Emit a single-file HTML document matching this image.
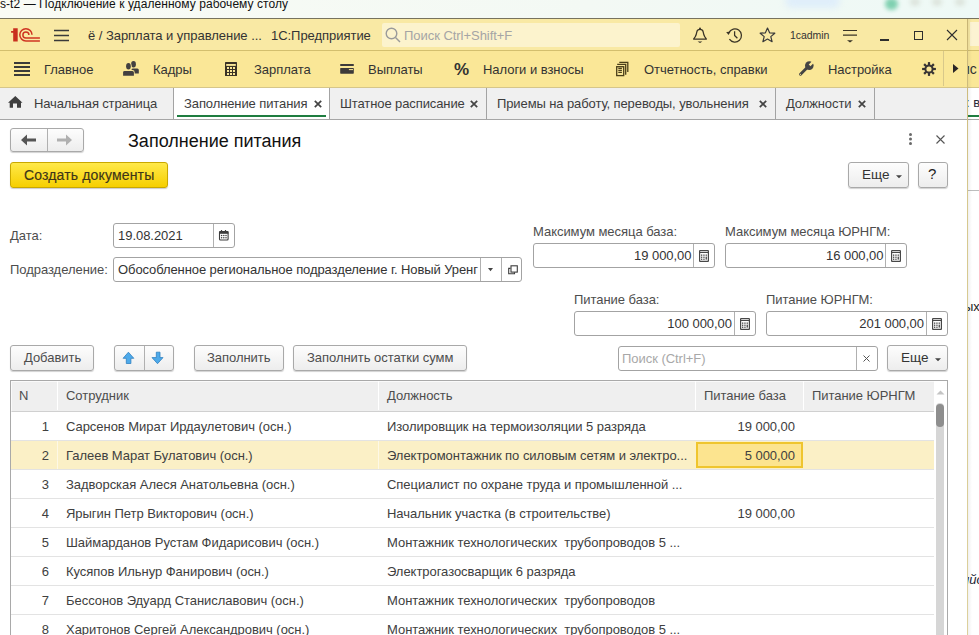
<!DOCTYPE html>
<html><head><meta charset="utf-8">
<style>
*{box-sizing:border-box;margin:0;padding:0}
html,body{width:979px;height:635px;overflow:hidden;background:#fff;font-family:"Liberation Sans",sans-serif;font-size:13px;color:#4d4d4d}
.a{position:absolute}
.t{position:absolute;white-space:nowrap;line-height:16px;letter-spacing:-0.04px}
.btn{position:absolute;border:1px solid #a9a9a9;border-radius:3px;background:linear-gradient(#fdfdfd,#ededed);box-shadow:0 1px 1px rgba(0,0,0,.18);color:#404040}
.inp{position:absolute;border:1px solid #a3a3a3;border-radius:3px;background:#fff;color:#333}
.vd{position:absolute;top:0;bottom:0;width:1px;background:#c8c8c8}
.ic{position:absolute}
.row{position:absolute;left:11px;width:923px;height:29px;border-bottom:1px solid #e3e3e3}
.row .t{top:7px;color:#404040}
</style></head><body>
<!-- RDP title bar -->
<div class="a" style="left:0;top:0;width:979px;height:19px;background:linear-gradient(90deg,#f9fbf5,#f3f9f4 60%,#eef9f6)"></div>
<div class="a" style="left:785px;top:-6px;width:55px;height:14px;border-radius:8px;background:#dfeefa;filter:blur(3px)"></div>
<div class="a" style="left:885px;top:-2px;width:13px;height:12px;border-radius:7px;background:#7fd0b0;filter:blur(2px)"></div>
<div class="a" style="left:910px;top:-2px;width:10px;height:8px;border-radius:5px;background:#dde5dd;filter:blur(2px)"></div>
<div class="a" style="left:932px;top:-2px;width:10px;height:8px;border-radius:5px;background:#dde5dd;filter:blur(2px)"></div>
<div class="a" style="left:955px;top:-2px;width:10px;height:8px;border-radius:5px;background:#dde5dd;filter:blur(2px)"></div>
<div class="t" style="left:0px;top:-3px;color:#111;font-size:12px;line-height:15px;letter-spacing:0.06px">s-t2 — Подключение к удаленному рабочему столу</div>
<div class="a" style="left:0;top:18px;width:979px;height:1px;background:#77735e"></div>

<!-- background window at right -->
<div class="a" style="left:968px;top:19px;width:11px;height:616px;background:#fff;overflow:hidden">
  <div class="a" style="left:0;top:0;width:11px;height:32px;background:#f9e9a4"></div>
  <div class="a" style="left:2px;top:3px;width:12px;height:24px;background:#fcf3d2"></div>
  <div class="a" style="left:0;top:31px;width:11px;height:1px;background:#d3bf6e"></div>
  <div class="a" style="left:0;top:32px;width:11px;height:36px;background:#fae797"></div>
  <div class="a" style="left:0;top:68px;width:11px;height:1px;background:#d6c68a"></div>
  <div class="t" style="left:-6px;top:42px;color:#333;font-size:14px">ис</div>
  <div class="t" style="left:-2px;top:76px;color:#2a2a3a">: в</div>
  <div class="a" style="left:0;top:96px;width:11px;height:2px;background:#1f7d40"></div>
  <div class="a" style="left:0;top:100px;width:11px;height:1px;background:#a6a6a6"></div>
  <div class="a" style="left:0;top:171px;width:11px;height:1px;background:#bdbdbd"></div>
  <div class="t" style="left:-4px;top:280px;color:#222">ых</div>
  <div class="t" style="left:-6px;top:553px;color:#1c1c30;font-style:italic">ийс</div>
  <div class="a" style="left:0;top:0;width:4px;height:616px;background:linear-gradient(90deg,rgba(0,0,0,.06),rgba(0,0,0,0))"></div>
</div>
<!-- 1C window -->
<div class="a" style="left:0;top:19px;width:967px;height:32px;background:#f9e9a4"></div>
<div class="a" style="left:0;top:50px;width:967px;height:1px;background:#d3bf6e"></div>
<div class="a" style="left:0;top:51px;width:967px;height:36px;background:#fae797"></div>
<div class="a" style="left:967px;top:19px;width:1px;height:616px;background:linear-gradient(#c8b474,#d6c88e 30%,#dcd09c)"></div>

<!-- bar1 -->
<svg class="ic" style="left:8px;top:24px" width="36" height="22" viewBox="0 0 36 22">
  <path d="M3.1 7.1 H5.2 V4.2 H9.7 V17.6 H5.2 V8.7 H3.1Z" fill="#c9301f"/>
  <g fill="none" stroke="#cf3422" stroke-width="1.5">
    <path d="M24 10.8 A6.1 6.1 0 1 0 17.9 16.9 H31.9"/>
    <path d="M20.9 10.9 A3 3 0 1 0 17.9 13.9 H31.9"/>
  </g>
</svg>
<svg class="ic" style="left:54px;top:29px" width="15" height="13" viewBox="0 0 15 13">
  <g stroke="#3a3a3a" stroke-width="1.3"><path d="M0 1.5H15M0 6.5H15M0 11.5H15"/></g>
</svg>
<div class="t" style="left:88px;top:28px;color:#333">ё / Зарплата и управление ...</div>
<div class="t" style="left:271px;top:28px;color:#333">1С:Предприятие</div>
<div class="a" style="left:382px;top:23px;width:298px;height:24px;background:#fcf3cd;border-radius:2px"></div>
<svg class="ic" style="left:385px;top:27px" width="16" height="16" viewBox="0 0 16 16">
  <g fill="none" stroke="#9a9a9a" stroke-width="1.4"><circle cx="6.5" cy="6.5" r="5.3"/><path d="M10.5 10.5 L15 15"/></g>
</svg>
<div class="t" style="left:404px;top:28px;color:#a5a5a5">Поиск Ctrl+Shift+F</div>
<!-- bell + history -->
<svg class="ic" style="left:688px;top:24px" width="60" height="24" viewBox="0 0 60 24">
  <g fill="none" stroke="#3a3426" stroke-width="1.25" stroke-linejoin="round">
    <path d="M5.6 15 L7.3 12.6 C8.2 11 8.6 9.3 8.9 7.6 C9.2 6 10.4 5.3 12 5.3 C13.6 5.3 14.8 6 15.1 7.6 C15.4 9.3 15.8 11 16.7 12.6 L18.4 15 Z"/>
        <path d="M40.9 8.6 A6.6 6.6 0 1 1 41.4 15.2"/>
    <path d="M46.6 7.2 V11.5 L49.4 14.3"/>
  </g>
  <circle cx="12" cy="4.6" r="1" fill="#3a3426"/>
  <path d="M9.6 17.4 H14.4 L12 18.9Z" fill="#3a3426"/>
  <path d="M38.2 8.1 L42.5 7.8 L40.5 10.9Z" fill="#3a3426"/>
</svg>
<!-- star -->
<svg class="ic" style="left:759px;top:27px" width="17" height="16" viewBox="0 0 17 16">
  <path d="M8.5 1 L10.6 5.8 L15.8 6.2 L11.8 9.6 L13.1 14.7 L8.5 12 L3.9 14.7 L5.2 9.6 L1.2 6.2 L6.4 5.8Z" fill="none" stroke="#3a3a3a" stroke-width="1.2" stroke-linejoin="round"/>
</svg>
<div class="t" style="left:790px;top:27px;color:#333;font-size:10.5px">1cadmin</div>
<svg class="ic" style="left:843px;top:29px" width="15" height="14" viewBox="0 0 15 14">
  <g stroke="#3a3426" stroke-width="1.2"><path d="M0 1.5H14M0 6.2H14"/></g>
  <path d="M4 11.2 H10 L7 13.5Z" fill="#3a3426"/>
</svg>
<div class="a" style="left:880px;top:39px;width:9px;height:1.5px;background:#2e2e2e"></div>
<div class="a" style="left:914px;top:31px;width:9px;height:9px;border:1.5px solid #2e2e2e"></div>
<svg class="ic" style="left:946px;top:29px" width="12" height="12" viewBox="0 0 12 12">
  <g stroke="#2e2e2e" stroke-width="1.1"><path d="M1 1L11 11M11 1L1 11"/></g>
</svg>

<!-- bar2 -->
<svg class="ic" style="left:14px;top:62px" width="16" height="14" viewBox="0 0 16 14">
  <g stroke="#3a3a3a" stroke-width="2"><path d="M0 1H16M0 5H16M0 9H16M0 13H16"/></g>
</svg>
<div class="t" style="left:44px;top:62px;color:#333">Главное</div>
<svg class="ic" style="left:118px;top:56px" width="28" height="24" viewBox="0 0 28 24">
<g fill="#434040"><ellipse cx="15.5" cy="8.2" rx="2.4" ry="3.2"/><path d="M13.5 14 Q13.5 12.6 15 12.6 H19.3 Q20.8 12.6 20.8 14.1 V17.6 H14.5Z"/></g>
<g fill="#fae797" stroke="#fae797" stroke-width="1.6"><ellipse cx="10.45" cy="10.3" rx="2.35" ry="3.3"/><path d="M5.1 16.3 Q5.1 14.9 6.6 14.9 H14.4 Q15.9 14.9 15.9 16.4 V19.7 H5.1Z"/></g>
<g fill="#434040"><ellipse cx="10.45" cy="10.3" rx="2.35" ry="3.3"/><path d="M5.1 16.3 Q5.1 14.9 6.6 14.9 H14.4 Q15.9 14.9 15.9 16.4 V19.7 H5.1Z"/></g>
</svg>
<div class="t" style="left:153px;top:62px;color:#333">Кадры</div>
<svg class="ic" style="left:225px;top:62px" width="12" height="14" viewBox="0 0 12 14"><rect x="0" y="0" width="12" height="14" rx="0.6" fill="#3a3226"/><rect x="1.2" y="2" width="9.6" height="1.9" fill="#fae797"/><g fill="#fae797"><rect x="2" y="5" width="2" height="2"/><rect x="5" y="5" width="2" height="2"/><rect x="8" y="5" width="2" height="2"/><rect x="2" y="8" width="2" height="2"/><rect x="5" y="8" width="2" height="2"/><rect x="8" y="8" width="2" height="2"/><rect x="2" y="11" width="2" height="2"/><rect x="5" y="11" width="2" height="2"/><rect x="8" y="11" width="2" height="2"/></g></svg>
<div class="t" style="left:254px;top:62px;color:#333">Зарплата</div>
<svg class="ic" style="left:340px;top:64px" width="14" height="10" viewBox="0 0 14 10"><rect x="0.2" y="0" width="13.6" height="1.9" rx="0.5" fill="#3d3a3a"/><rect x="0.2" y="4" width="13.6" height="5.7" rx="0.6" fill="#3d3a3a"/><rect x="8.9" y="5.1" width="4.1" height="1" fill="#fae797"/></svg>
<div class="t" style="left:368px;top:62px;color:#333">Выплаты</div>
<div class="t" style="left:454px;top:60px;color:#333;font-size:17px;font-weight:bold;line-height:20px">%</div>
<div class="t" style="left:483px;top:62px;color:#333">Налоги и взносы</div>
<svg class="ic" style="left:608px;top:58px" width="28" height="22" viewBox="0 0 28 22"><g fill="none" stroke="#4a3f1a" stroke-width="1.3"><path d="M11.3 4.3 H19.8 V13.9"/><path d="M9.2 6.4 H17.7 V16.8"/><rect x="8.7" y="8.7" width="7" height="8.9"/><path d="M10.3 10.4H13.9M10.3 12.4H13.9M10.3 14.4H13.9"/></g></svg>
<div class="t" style="left:644px;top:62px;color:#333">Отчетность, справки</div>
<svg class="ic" style="left:790px;top:55px" width="30" height="26" viewBox="0 0 30 26"><g fill="#444"><path d="M10.5 19.2 L17 12.7" stroke="#444" stroke-width="2.9" stroke-linecap="round"/><circle cx="19.3" cy="10.6" r="4.3"/></g><path d="M20.45 11.15 L24.2 7.4 L22.5 5.7 L18.75 9.45Z" fill="#fae797"/><circle cx="10.4" cy="19.3" r="0.6" fill="#fae797"/></svg>
<div class="t" style="left:828px;top:62px;color:#333">Настройка</div>
<svg class="ic" style="left:921px;top:61px" width="16" height="16" viewBox="-8 -8 16 16"><g fill="#383434"><rect x="-1.1" y="-6.9" width="2.2" height="3" transform="rotate(0)"/><rect x="-1.1" y="-6.9" width="2.2" height="3" transform="rotate(45)"/><rect x="-1.1" y="-6.9" width="2.2" height="3" transform="rotate(90)"/><rect x="-1.1" y="-6.9" width="2.2" height="3" transform="rotate(135)"/><rect x="-1.1" y="-6.9" width="2.2" height="3" transform="rotate(180)"/><rect x="-1.1" y="-6.9" width="2.2" height="3" transform="rotate(225)"/><rect x="-1.1" y="-6.9" width="2.2" height="3" transform="rotate(270)"/><rect x="-1.1" y="-6.9" width="2.2" height="3" transform="rotate(315)"/></g><circle cx="0" cy="0" r="3.6" fill="none" stroke="#383434" stroke-width="2"/></svg>
<div class="a" style="left:943px;top:51px;width:1px;height:35px;background:#d8c88a"></div>
<svg class="ic" style="left:953px;top:64px" width="6" height="9" viewBox="0 0 6 9"><path d="M0 0 L5.5 4.5 L0 9Z" fill="#2a2626"/></svg>

<!-- tabs -->
<div class="a" style="left:0;top:86px;width:967px;height:1px;background:#fae797"></div>
<div class="a" style="left:0;top:87px;width:967px;height:1px;background:#d6c68a"></div>
<div class="a" style="left:0;top:88px;width:967px;height:31px;background:#f0f0f0"></div>
<div class="a" style="left:0;top:119px;width:967px;height:1px;background:#a6a6a6"></div>
<svg class="ic" style="left:8px;top:96px" width="15" height="12" viewBox="0 0 15 12"><path d="M7.3 0 L14.5 6.7 H13 V11.7 H9 V7.4 H5 V11.7 H1.7 V6.7 H0Z" fill="#3f3f3f"/></svg>
<div class="t" style="left:34px;top:96px;color:#3d3d3d;letter-spacing:-0.15px">Начальная страница</div>
<div class="a" style="left:173px;top:88px;width:1px;height:31px;background:#a3a3a3"></div>
<div class="a" style="left:174px;top:88px;width:155px;height:31px;background:#fff"></div>
<div class="t" style="left:184px;top:96px;color:#3d3d3d;letter-spacing:-0.1px">Заполнение питания</div>
<div class="a" style="left:177px;top:115px;width:149px;height:2px;background:#1f7d40"></div>
<div class="a" style="left:329px;top:88px;width:1px;height:31px;background:#a3a3a3"></div>
<div class="t" style="left:340px;top:96px;color:#3d3d3d;letter-spacing:-0.1px">Штатное расписание</div>
<div class="a" style="left:486px;top:88px;width:1px;height:31px;background:#a3a3a3"></div>
<div class="t" style="left:497px;top:96px;color:#3d3d3d;letter-spacing:-0.1px">Приемы на работу, переводы, увольнения</div>
<div class="a" style="left:775px;top:88px;width:1px;height:31px;background:#a3a3a3"></div>
<div class="t" style="left:786px;top:96px;color:#3d3d3d;letter-spacing:-0.1px">Должности</div>
<div class="a" style="left:874px;top:88px;width:1px;height:31px;background:#a3a3a3"></div>
<svg class="ic" style="left:314px;top:100px" width="8" height="8" viewBox="0 0 8 8"><g stroke="#444" stroke-width="1.7"><path d="M0.8 0.8L7.2 7.2M7.2 0.8L0.8 7.2"/></g></svg><svg class="ic" style="left:470px;top:100px" width="8" height="8" viewBox="0 0 8 8"><g stroke="#444" stroke-width="1.7"><path d="M0.8 0.8L7.2 7.2M7.2 0.8L0.8 7.2"/></g></svg><svg class="ic" style="left:759px;top:100px" width="8" height="8" viewBox="0 0 8 8"><g stroke="#444" stroke-width="1.7"><path d="M0.8 0.8L7.2 7.2M7.2 0.8L0.8 7.2"/></g></svg><svg class="ic" style="left:858px;top:100px" width="8" height="8" viewBox="0 0 8 8"><g stroke="#444" stroke-width="1.7"><path d="M0.8 0.8L7.2 7.2M7.2 0.8L0.8 7.2"/></g></svg>
<!-- form header -->
<div class="btn" style="left:10px;top:128px;width:74px;height:24px"></div>
<div class="a" style="left:47px;top:129px;width:1px;height:22px;background:#b0b0b0"></div>
<svg class="ic" style="left:21px;top:134px" width="16" height="12" viewBox="0 0 16 12"><path d="M0 6 L6 0.5 V4.5 H15 V7.5 H6 V11.5Z" fill="#555"/></svg>
<svg class="ic" style="left:56px;top:134px" width="16" height="12" viewBox="0 0 16 12"><path d="M16 6 L10 0.5 V4.5 H1 V7.5 H10 V11.5Z" fill="#b0b0b0"/></svg>
<div class="t" style="left:128px;top:130px;color:#111;font-size:18px;line-height:22px;letter-spacing:0">Заполнение питания</div>
<svg class="ic" style="left:908px;top:133px" width="5" height="12" viewBox="0 0 5 12"><g fill="#6a6a6a"><circle cx="2.5" cy="1.5" r="1.5"/><circle cx="2.5" cy="6" r="1.5"/><circle cx="2.5" cy="10.5" r="1.5"/></g></svg>
<svg class="ic" style="left:936px;top:135px" width="9" height="9" viewBox="0 0 9 9"><g stroke="#555" stroke-width="1.1"><path d="M0.5 0.5L8.5 8.5M8.5 0.5L0.5 8.5"/></g></svg>

<div class="a" style="left:10px;top:162px;width:158px;height:26px;border:1px solid #c9a800;border-radius:3px;background:linear-gradient(#ffe94a,#f6cf00);box-shadow:0 1px 1px rgba(0,0,0,.2)"></div>
<div class="t" style="left:24px;top:167px;color:#3d3518;font-size:14px;letter-spacing:0.15px;-webkit-text-stroke:0.15px #3d3518">Создать документы</div>

<div class="btn" style="left:848px;top:162px;width:61px;height:26px"></div>
<div class="t" style="left:862px;top:167px;color:#333;font-size:13.5px">Еще</div>
<svg class="ic" style="left:896px;top:175px" width="6" height="4" viewBox="0 0 6 4"><path d="M0 0.3H6L3 3.2Z" fill="#444"/></svg>
<div class="btn" style="left:918px;top:162px;width:30px;height:26px"></div>
<div class="t" style="left:928px;top:166px;color:#222;font-size:15px">?</div>

<!-- fields -->
<div class="t" style="left:10px;top:228px">Дата:</div>
<div class="inp" style="left:113px;top:223px;width:122px;height:25px"></div>
<div class="a" style="left:213px;top:224px;width:1px;height:23px;background:#b0b0b0"></div>
<div class="t" style="left:118px;top:228px;color:#333">19.08.2021</div>
<svg class="ic" style="left:218px;top:229px" width="12" height="12" viewBox="0 0 12 12"><rect x="1.5" y="2.6" width="8.6" height="8.4" rx="1" fill="none" stroke="#3c3c3c" stroke-width="1.1"/><rect x="1.2" y="2.2" width="9.2" height="2.6" fill="#3c3c3c"/><path d="M3.5 1V3M7.5 1V3" stroke="#3c3c3c" stroke-width="1.2"/><g fill="#3c3c3c"><circle cx="3.6" cy="6.6" r="0.75"/><circle cx="5.8" cy="6.6" r="0.75"/><circle cx="8" cy="6.6" r="0.75"/><circle cx="3.6" cy="8.7" r="0.75"/><circle cx="5.8" cy="8.7" r="0.75"/><circle cx="8" cy="8.7" r="0.75"/></g></svg>

<div class="t" style="left:10px;top:262px">Подразделение:</div>
<div class="inp" style="left:113px;top:257px;width:409px;height:25px"></div>
<div class="t" style="left:118px;top:262px;width:361px;overflow:hidden;color:#333;letter-spacing:-0.09px">Обособленное региональное подразделение г. Новый Уренг</div>
<div class="a" style="left:480px;top:258px;width:1px;height:23px;background:#b0b0b0"></div>
<div class="a" style="left:501px;top:258px;width:1px;height:23px;background:#b0b0b0"></div>
<svg class="ic" style="left:487px;top:267px" width="7" height="5" viewBox="0 0 7 5"><path d="M1 1H6L3.5 4.3Z" fill="#444"/></svg>
<svg class="ic" style="left:506px;top:263px" width="14" height="13" viewBox="0 0 14 13"><g fill="none" stroke="#3c3c3c" stroke-width="1.1"><rect x="5" y="2.8" width="6.3" height="6.3"/><path d="M4.5 5.4H2.7V10.7H8.5V9.2"/></g></svg>

<div class="t" style="left:533px;top:224px">Максимум месяца база:</div>
<div class="inp" style="left:533px;top:243px;width:182px;height:25px"></div>
<div class="a" style="left:693px;top:244px;width:1px;height:23px;background:#b0b0b0"></div>
<div class="t" style="left:634px;top:248px;width:57px;text-align:right;color:#333">19 000,00</div>
<div class="t" style="left:725px;top:224px">Максимум месяца ЮРНГМ:</div>
<div class="inp" style="left:725px;top:243px;width:182px;height:25px"></div>
<div class="a" style="left:885px;top:244px;width:1px;height:23px;background:#b0b0b0"></div>
<div class="t" style="left:826px;top:248px;width:57px;text-align:right;color:#333">16 000,00</div>

<div class="t" style="left:574px;top:292px">Питание база:</div>
<div class="inp" style="left:574px;top:311px;width:182px;height:25px"></div>
<div class="a" style="left:734px;top:312px;width:1px;height:23px;background:#b0b0b0"></div>
<div class="t" style="left:652px;top:316px;width:80px;text-align:right;color:#333">100 000,00</div>
<div class="t" style="left:766px;top:292px">Питание ЮРНГМ:</div>
<div class="inp" style="left:766px;top:311px;width:182px;height:25px"></div>
<div class="a" style="left:926px;top:312px;width:1px;height:23px;background:#b0b0b0"></div>
<div class="t" style="left:844px;top:316px;width:80px;text-align:right;color:#333">201 000,00</div>

<svg class="ic" style="left:699px;top:250px" width="10" height="12" viewBox="0 0 10 12"><rect x="0.6" y="0.6" width="8.8" height="10.8" rx="0.5" fill="none" stroke="#474747" stroke-width="1.2"/><rect x="1" y="2" width="8" height="1" fill="#474747"/><g fill="#474747"><rect x="2" y="4.5" width="1.3" height="1.3"/><rect x="4.3" y="4.5" width="1.3" height="1.3"/><rect x="6.6" y="4.5" width="1.3" height="1.3"/><rect x="2" y="6.6" width="1.3" height="1.3"/><rect x="4.3" y="6.6" width="1.3" height="1.3"/><rect x="6.6" y="6.6" width="1.3" height="3"/><rect x="2" y="8.6" width="1.3" height="1.3"/><rect x="4.3" y="8.6" width="1.3" height="1.3"/></g></svg><svg class="ic" style="left:891px;top:250px" width="10" height="12" viewBox="0 0 10 12"><rect x="0.6" y="0.6" width="8.8" height="10.8" rx="0.5" fill="none" stroke="#474747" stroke-width="1.2"/><rect x="1" y="2" width="8" height="1" fill="#474747"/><g fill="#474747"><rect x="2" y="4.5" width="1.3" height="1.3"/><rect x="4.3" y="4.5" width="1.3" height="1.3"/><rect x="6.6" y="4.5" width="1.3" height="1.3"/><rect x="2" y="6.6" width="1.3" height="1.3"/><rect x="4.3" y="6.6" width="1.3" height="1.3"/><rect x="6.6" y="6.6" width="1.3" height="3"/><rect x="2" y="8.6" width="1.3" height="1.3"/><rect x="4.3" y="8.6" width="1.3" height="1.3"/></g></svg><svg class="ic" style="left:740px;top:318px" width="10" height="12" viewBox="0 0 10 12"><rect x="0.6" y="0.6" width="8.8" height="10.8" rx="0.5" fill="none" stroke="#474747" stroke-width="1.2"/><rect x="1" y="2" width="8" height="1" fill="#474747"/><g fill="#474747"><rect x="2" y="4.5" width="1.3" height="1.3"/><rect x="4.3" y="4.5" width="1.3" height="1.3"/><rect x="6.6" y="4.5" width="1.3" height="1.3"/><rect x="2" y="6.6" width="1.3" height="1.3"/><rect x="4.3" y="6.6" width="1.3" height="1.3"/><rect x="6.6" y="6.6" width="1.3" height="3"/><rect x="2" y="8.6" width="1.3" height="1.3"/><rect x="4.3" y="8.6" width="1.3" height="1.3"/></g></svg><svg class="ic" style="left:932px;top:318px" width="10" height="12" viewBox="0 0 10 12"><rect x="0.6" y="0.6" width="8.8" height="10.8" rx="0.5" fill="none" stroke="#474747" stroke-width="1.2"/><rect x="1" y="2" width="8" height="1" fill="#474747"/><g fill="#474747"><rect x="2" y="4.5" width="1.3" height="1.3"/><rect x="4.3" y="4.5" width="1.3" height="1.3"/><rect x="6.6" y="4.5" width="1.3" height="1.3"/><rect x="2" y="6.6" width="1.3" height="1.3"/><rect x="4.3" y="6.6" width="1.3" height="1.3"/><rect x="6.6" y="6.6" width="1.3" height="3"/><rect x="2" y="8.6" width="1.3" height="1.3"/><rect x="4.3" y="8.6" width="1.3" height="1.3"/></g></svg>
<!-- table toolbar -->
<div class="btn" style="left:10px;top:345px;width:84px;height:26px"></div>
<div class="t" style="left:24px;top:350px">Добавить</div>
<div class="btn" style="left:114px;top:345px;width:60px;height:26px"></div>
<div class="a" style="left:144px;top:346px;width:1px;height:24px;background:#b0b0b0"></div>
<svg class="ic" style="left:114px;top:345px" width="60" height="27" viewBox="0 0 60 27"><g fill="#4eaaea" stroke="#2f80c0" stroke-width="0.8" stroke-linejoin="miter"><path d="M14.4 7.2 L19.8 13.3 H16.9 V18.5 H12.3 V13.3 H9.1Z"/><path d="M43.5 18.7 L49 12.6 H46 V7.2 H42.3 V12.6 H38Z"/></g></svg>

<div class="btn" style="left:194px;top:345px;width:90px;height:26px"></div>
<div class="t" style="left:207px;top:350px">Заполнить</div>
<div class="btn" style="left:293px;top:345px;width:174px;height:26px"></div>
<div class="t" style="left:307px;top:350px">Заполнить остатки сумм</div>

<div class="inp" style="left:618px;top:346px;width:260px;height:25px"></div>
<div class="t" style="left:622px;top:351px;color:#a8a8a8">Поиск (Ctrl+F)</div>
<div class="a" style="left:856px;top:347px;width:1px;height:23px;background:#b0b0b0"></div>
<svg class="ic" style="left:863px;top:355px" width="7" height="7" viewBox="0 0 7 7"><g stroke="#555" stroke-width="1"><path d="M0.5 0.5L6.5 6.5M6.5 0.5L0.5 6.5"/></g></svg>
<div class="btn" style="left:887px;top:345px;width:61px;height:26px"></div>
<div class="t" style="left:901px;top:350px;color:#333;font-size:13.5px">Еще</div>
<svg class="ic" style="left:935px;top:358px" width="6" height="4" viewBox="0 0 6 4"><path d="M0 0.3H6L3 3.2Z" fill="#444"/></svg>

<!-- table -->
<div class="a" style="left:10px;top:380px;width:938px;height:255px;border:1px solid #a9a9a9;border-bottom:none;background:#fff"></div>
<div class="a" style="left:11px;top:381px;width:923px;height:31px;background:#efefef;border-bottom:1px solid #d0d0d0;border-top:1px solid #fafafa;border-left:1px solid #fafafa"></div>
<div class="a" style="left:57px;top:381px;width:1px;height:29px;background:#fff"></div>
<div class="a" style="left:378px;top:381px;width:1px;height:29px;background:#fff"></div>
<div class="a" style="left:695px;top:381px;width:1px;height:29px;background:#fff"></div>
<div class="a" style="left:803px;top:381px;width:1px;height:29px;background:#fff"></div>
<div class="t" style="left:19px;top:388px">N</div>
<div class="t" style="left:66px;top:388px">Сотрудник</div>
<div class="t" style="left:387px;top:388px">Должность</div>
<div class="t" style="left:704px;top:388px">Питание база</div>
<div class="t" style="left:812px;top:388px">Питание ЮРНГМ</div>

<!-- scrollbar -->
<div class="a" style="left:934px;top:381px;width:13px;height:254px;background:#fff"></div>
<svg class="ic" style="left:936px;top:390px" width="9" height="5" viewBox="0 0 9 5"><path d="M0.5 4.5 L4.5 0.5 L8.5 4.5Z" fill="#c4c4c4"/></svg>
<div class="a" style="left:936px;top:403px;width:8px;height:232px;background:#d6d6d6;border-radius:4px 4px 0 0"></div>
<div class="a" style="left:936px;top:404px;width:8px;height:23px;background:#8e8e8e;border-radius:4px"></div>

<!-- rows -->
<div class="row" style="top:412px"><div class="t" style="left:0;width:38px;text-align:right">1</div><div class="t" style="left:55px">Сарсенов Мират Ирдаулетович (осн.)</div><div class="t" style="left:376px">Изолировщик на термоизоляции 5 разряда</div><div class="t" style="left:685px;width:99px;text-align:right">19 000,00</div></div>
<div class="row" style="top:441px;background:#fbf0c6"><div class="a" style="left:46px;top:0;width:1px;height:28px;background:#fdf8e6"></div><div class="a" style="left:367px;top:0;width:1px;height:28px;background:#fdf8e6"></div><div class="t" style="left:0;width:38px;text-align:right">2</div><div class="t" style="left:55px">Галеев Марат Булатович (осн.)</div><div class="t" style="left:376px">Электромонтажник по силовым сетям и электро...</div><div class="a" style="left:685px;top:1px;width:107px;height:26px;border:2px solid #efc52e;background:#fce48f"></div><div class="t" style="left:685px;width:99px;text-align:right">5 000,00</div></div>
<div class="row" style="top:470px"><div class="t" style="left:0;width:38px;text-align:right">3</div><div class="t" style="left:55px">Задворская Алеся Анатольевна (осн.)</div><div class="t" style="left:376px">Специалист по охране труда и промышленной ...</div></div>
<div class="row" style="top:499px"><div class="t" style="left:0;width:38px;text-align:right">4</div><div class="t" style="left:55px">Ярыгин Петр Викторович (осн.)</div><div class="t" style="left:376px">Начальник участка (в строительстве)</div><div class="t" style="left:685px;width:99px;text-align:right">19 000,00</div></div>
<div class="row" style="top:528px"><div class="t" style="left:0;width:38px;text-align:right">5</div><div class="t" style="left:55px">Шаймарданов Рустам Фидарисович (осн.)</div><div class="t" style="left:376px">Монтажник технологических&nbsp; трубопроводов 5 ...</div></div>
<div class="row" style="top:557px"><div class="t" style="left:0;width:38px;text-align:right">6</div><div class="t" style="left:55px">Кусяпов Ильнур Фанирович (осн.)</div><div class="t" style="left:376px">Электрогазосварщик 6 разряда</div></div>
<div class="row" style="top:586px"><div class="t" style="left:0;width:38px;text-align:right">7</div><div class="t" style="left:55px">Бессонов Эдуард Станиславович (осн.)</div><div class="t" style="left:376px">Монтажник технологических&nbsp; трубопроводов</div></div>
<div class="row" style="top:615px"><div class="t" style="left:0;width:38px;text-align:right">8</div><div class="t" style="left:55px">Харитонов Сергей Александрович (осн.)</div><div class="t" style="left:376px">Монтажник технологических&nbsp; трубопроводов 5 ...</div></div>

</body></html>
